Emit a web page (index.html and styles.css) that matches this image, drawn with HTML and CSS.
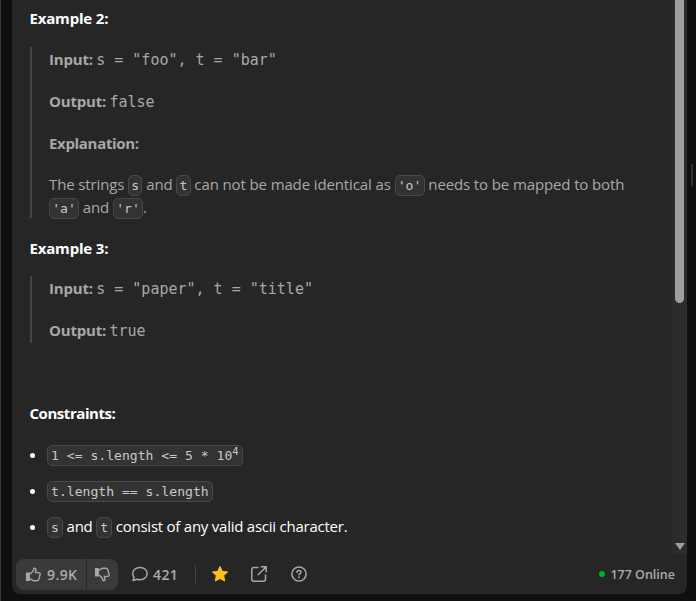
FILE: index.html
```html
<!DOCTYPE html>
<html lang="en">
<head>
<meta charset="utf-8">
<title>Isomorphic Strings</title>
<link rel="stylesheet" href="styles.css">
</head>
<body>
<div class="window">
  <main class="panel">
    <div class="viewport">
      <article class="content">
        <h3 class="heading">Example 2:</h3>
        <blockquote class="quote">
          <p><b>Input:</b> <span class="io">s = "foo", t = "bar"</span></p>
          <p><b>Output:</b> <span class="io">false</span></p>
          <p><b class="tight">Explanation:</b></p>
          <p class="prose">The strings <code>s</code> and <code>t</code> can not be made identical as <code>'o'</code> needs to be mapped to both<br><code>'a'</code> and <code>'r'</code>.</p>
        </blockquote>
        <h3 class="heading second">Example 3:</h3>
        <blockquote class="quote short">
          <p><b>Input:</b> <span class="io">s = "paper", t = "title"</span></p>
          <p><b>Output:</b> <span class="io">true</span></p>
        </blockquote>
        <h3 class="heading constraints">Constraints:</h3>
        <ul class="rules">
          <li><code>1 &lt;= s.length &lt;= 5 * 10<sup>4</sup></code></li>
          <li><code>t.length == s.length</code></li>
          <li><code>s</code> and <code>t</code> consist of any valid ascii character.</li>
        </ul>
      </article>
      <div class="scrollbar"><div class="thumb"></div><div class="arrow"></div></div>
    </div>
    <footer class="footer">
      <div class="votes">
        <div class="vote up">
          <svg width="18" height="18" viewBox="0 0 18 18"><path class="solid" d="M1 7h4.200v9H1z"/><path class="line" d="M5.500 8.200 8.500 5.600 9.600 2.300Q11.900 2.200 11.600 4.500L11 7h3.500q2 .2 1.500 2l-1.400 5.200q-.4 1.500-2 1.500H9.300L5.500 13.700"/></svg>
          <span>9.9K</span>
        </div>
        <div class="vote down">
          <svg width="18" height="18" viewBox="0 0 18 18"><path class="solid" d="M1 2h4.200v9H1z"/><path class="line" d="M5.500 4.300 9.300 2.300h3.300q1.600 0 2 1.500L16 9q.5 1.800-1.500 2H11l.6 2.500q.3 2.300-2 2.200L8.500 12.400 5.500 9.800"/></svg>
        </div>
      </div>
      <div class="comments">
        <svg width="18" height="18" viewBox="0 0 18 18"><path class="line" d="M2.100 15.500 3 12.300C-.2 7.800 3.200 2.500 9 2.500c4.200 0 7.200 2.700 7.200 6.100s-3 6.100-7.200 6.100q-1.500 0-2.800-.5z"/></svg>
        <span>421</span>
      </div>
      <div class="divider"></div>
      <svg class="star" width="18" height="18" viewBox="0 0 18 18"><path d="m9 1.500 2.300 4.800 5.300.7-3.900 3.600 1 5.400L9 13.500 4.300 16l1-5.400L1.400 7l5.300-.7z"/></svg>
      <svg class="share" width="18" height="18" viewBox="0 0 18 18"><path class="line" d="M8 2.500H3.800Q1.800 2.500 1.800 4.500v9.700q0 2 2 2h9.700q2 0 2-2V10M11.200 1.800h5v5M16 2 8.200 9.800"/></svg>
      <svg class="help" width="18" height="18" viewBox="0 0 18 18"><circle class="line" cx="9" cy="9" r="7.100"/><path class="line" d="M7 7.400q.1-1.800 2-1.800t2 1.600q0 1-1.200 1.600-.8.400-.8 1.300"/><circle class="solid" cx="9" cy="12.200" r=".9"/></svg>
      <div class="online"><i></i><span>177 Online</span></div>
    </footer>
  </main>
  <div class="gutter"><div class="handle"></div></div>
</div>
</body>
</html>
```

FILE: styles.css
```css
* { box-sizing: border-box; }
body { margin: 0; background: #0f0f0f; font-family: "Open Sans", sans-serif; font-size: 15px; line-height: 23px; color: #fff; }
.window { display: flex; width: 696px; height: 601px; overflow: hidden; border-left: 1px solid #303a50; padding-left: 11px; }
.panel { display: flex; flex-direction: column; width: 675px; height: 594px; background: #262626; border-radius: 0 0 8px 8px; overflow: hidden; }
.viewport { display: flex; height: 554px; }
.content { width: 660px; padding: 7px 0 0 17.500px; white-space: nowrap; }
.heading { height: 23px; margin: 0 0 17px; font-size: 15px; line-height: 23px; font-weight: 700; letter-spacing: -0.180px; }
.second { margin-bottom: 16px; }
.quote { height: 171px; margin: 0 0 19px .5px; padding: 1px 0 0 17px; border-left: 2px solid #454545; color: #a8a8a8; }
.short { height: 67px; margin-bottom: 0; }
.quote p { height: 23px; margin: 0 0 19px; }
.quote p:last-child { margin: 0; }
.quote p.prose:last-child { margin-top: -1px; letter-spacing: -0.120px; }
.quote b { letter-spacing: -0.180px; }
.quote .tight { letter-spacing: -0.320px; }
.io { margin-left: -.6px; font-family: "DejaVu Sans Mono", monospace; }
code { display: inline-block; height: 21px; margin: -1px 0; padding: 0 3px; border: 1px solid #484848; border-radius: 5px; background: #333; color: #c8c8c8; font: 13.1px/19px "DejaVu Sans Mono", monospace; letter-spacing: 0; }
.prose code { padding: 0 2.200px; }
.rules code { padding: 0 3px; }
sup { font-size: 10.500px; line-height: 0; vertical-align: 5px; }
.quote + .constraints { margin-top: 59px; margin-bottom: 18px; letter-spacing: -0.450px; }
.rules { margin: 0; padding-left: 17.500px; letter-spacing: -0.240px; }
.rules li { height: 36px; }
.scrollbar { position: relative; width: 15px; background: #2c2c2c; }
.thumb { width: 9px; height: 303px; margin-left: 3px; background: #9f9f9f; border-radius: 0 0 5px 5px; }
.arrow { position: absolute; left: 3px; bottom: 4px; border: 5px solid transparent; border-bottom: 0; border-top: 7px solid #a0a0a0; }
.footer { display: flex; align-items: center; height: 40px; padding: 0 12px 0 4px; color: #acacac; font-size: 14px; font-weight: 600; }
.votes { display: flex; gap: 1px; height: 31px; margin-top: 1px; border-radius: 8px; overflow: hidden; }
.vote { display: flex; align-items: center; background: #3a3a3a; }
.up { width: 70px; padding-left: 9px; gap: 5px; letter-spacing: .4px; }
.down { width: 31px; padding-left: 7px; }
svg { display: block; flex: none; }
.vote svg { width: 17px; height: 17px; margin-bottom: 1px; }
.line { fill: none; stroke: #a8a8a8; stroke-width: 1.500; stroke-linecap: round; stroke-linejoin: round; }
.solid { fill: #a8a8a8; }
.comments { display: flex; align-items: center; gap: 4px; margin-left: 13px; width: 64px; letter-spacing: .4px; }
.comments span, .online span { padding-top: 1px; }
.divider { width: 1px; height: 18px; background: #454545; }
.star { margin-left: 15px; fill: #ffc01e; stroke: #ffc01e; stroke-width: 1; stroke-linejoin: round; }
.share { margin-left: 21px; }
.help { margin-left: 22px; }
.online { display: flex; align-items: center; gap: 5px; margin-left: auto; font-size: 12.500px; }
.online i { width: 6px; height: 6px; border-radius: 50%; background: #02b128; }
.gutter { width: 9px; padding: 164px 0 0 4px; }
.handle { width: 2px; height: 22px; background: #303030; }
```
